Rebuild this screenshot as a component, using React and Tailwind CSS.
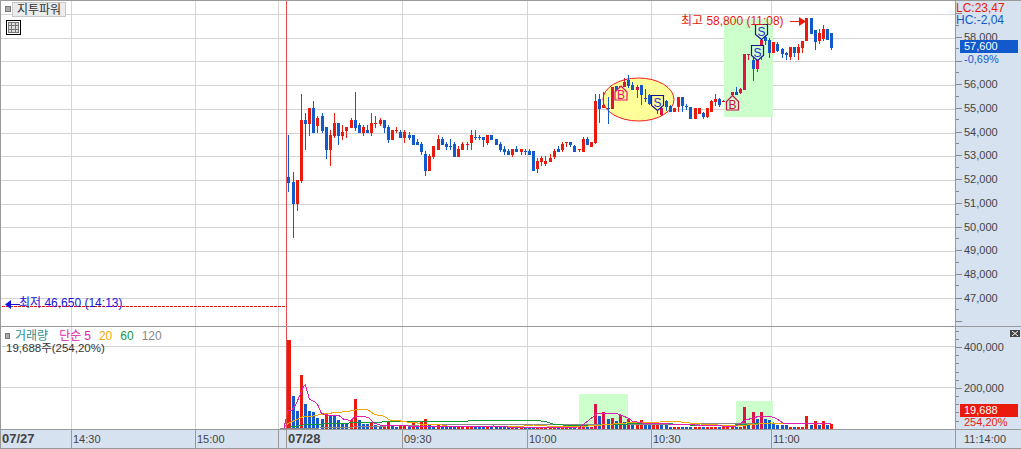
import React from "react";

const Z2 = [
[55,195,366,321,339,"b"],[70,306,504,336,402,"b"],[82,330,423,330,402,"r"],[94,72,339,150,333,"r"],[106,129,240,150,162,"b"],[118,114,198,114,162,"r"],[130,93,189,114,189,"b"],[142,138,189,144,168,"r"],
[157,129,189,138,183,"b"],[169,171,267,171,240,"b"],[181,180,288,195,240,"r"],[193,129,204,159,198,"r"],[205,159,225,159,198,"b"],[217,165,210,186,198,"r"],[229,171,204,171,183,"r"],
[244,144,174,150,174,"r"],[256,66,183,150,174,"b"],[268,159,189,165,189,"b"],[280,165,198,171,189,"r"],[292,165,189,180,189,"b"],[304,129,198,159,189,"r"],[316,138,174,159,162,"r"],
[331,144,168,150,162,"r"],[343,150,189,150,174,"b"],[355,165,219,171,210,"b"],[367,180,210,180,210,"r"],[379,171,189,180,183,"r"],[391,180,204,186,204,"b"],[403,180,219,186,204,"r"],
[418,186,210,195,204,"b"],[430,195,225,195,225,"b"],[442,207,225,216,225,"b"],[454,216,255,222,246,"b"],[466,243,318,252,303,"b"],[478,252,303,258,303,"r"],[490,228,267,228,261,"r"],
[505,195,240,207,240,"r"],[517,201,225,207,225,"b"],[529,216,240,222,231,"b"],[541,207,240,228,231,"b"],[553,216,261,222,261,"b"],[565,228,261,237,261,"r"],[577,216,240,222,240,"r"],
[592,216,240,222,225,"r"],[604,180,240,195,219,"r"],[616,180,210,201,204,"b"],[628,195,210,201,204,"b"],[640,201,231,201,210,"b"],[652,195,225,195,219,"r"],[664,195,210,195,210,"b"],
[679,207,225,207,225,"b"],[691,216,246,222,240,"b"],[703,228,255,237,246,"b"],[715,237,255,243,255,"b"],[727,237,261,237,255,"r"],[739,228,246,237,246,"b"],
[754,237,255,237,246,"r"],[766,237,255,243,246,"b"],[778,237,255,243,255,"b"],[790,243,303,243,303,"b"],[802,264,309,273,297,"r"],[814,258,288,264,276,"r"],[826,258,288,273,282,"r"],
[841,252,276,264,276,"r"],[853,237,267,243,261,"r"],[865,228,246,237,246,"b"],[877,216,246,222,240,"r"],[889,216,231,216,219,"r"],
];
const Z9 = [
[46,216,231,216,225,"b"],[58,225,246,228,246,"b"],[73,237,246,237,240,"r"],[85,201,246,207,246,"r"],[97,201,225,207,225,"b"],[109,216,231,216,231,"r"],[121,72,222,93,219,"r"],[133,72,159,87,117,"b"],
[145,66,114,105,114,"r"],[160,81,162,114,117,"b"],[172,51,117,51,117,"r"],[184,48,90,48,69,"b"],[196,48,66,48,66,"r"],[208,24,51,36,51,"r"],[220,15,54,30,48,"b"],[232,36,60,45,60,"b"],
[247,45,84,51,60,"r"],[259,45,105,45,75,"b"],[271,57,96,84,87,"b"],[283,72,105,75,102,"b"],[295,87,111,90,111,"b"],[307,105,132,105,120,"b"],[319,111,138,114,135,"r"],
[334,90,123,93,111,"b"],[346,105,126,108,126,"b"],[358,114,126,114,126,"r"],
];
const Z10 = [
[25,261,306,261,291,"r"],[37,261,306,261,288,"b"],[49,282,300,288,291,"b"],[61,291,327,291,327,"b"],[76,294,327,294,327,"r"],[88,294,312,294,312,"r"],[100,306,327,309,321,"b"],
[112,294,324,294,321,"r"],[124,270,306,273,306,"r"],[136,252,288,267,276,"r"],[148,264,291,267,285,"b"],[160,270,276,273,276,"r"],[172,270,276,273,276,"r"],[187,246,258,246,255,"r"],
[199,231,255,246,255,"b"],[211,234,252,237,249,"r"],[223,132,240,132,240,"r"],[235,132,150,132,135,"r"],[250,135,213,150,177,"b"],[262,150,186,150,177,"r"],[274,90,150,90,108,"r"],
[286,75,105,81,93,"b"],[298,84,144,90,129,"b"],[310,96,129,96,129,"r"],[322,96,126,102,123,"b"],[337,114,144,117,132,"b"],[349,126,150,129,135,"b"],[361,111,150,111,141,"r"],
[373,111,141,111,129,"b"],[385,102,150,111,129,"r"],[397,93,129,93,114,"r"],[409,24,93,24,93,"r"],[424,24,72,24,72,"b"],[436,60,120,60,96,"b"],[448,57,102,69,93,"r"],[460,45,93,57,87,"r"],
[472,57,90,57,90,"b"],[484,69,120,69,114,"b"],
];

const conv = (list, ox, oy) =>
  list.map(([x, h, l, t, b, c]) => ({
    x: Math.floor(ox + x / 3),
    hi: Math.round(oy + h / 3),
    lo: Math.round(oy + l / 3),
    top: Math.round(oy + t / 3),
    bot: Math.round(oy + b / 3),
    c,
  }));

const candles = [...conv(Z2, 270, 70), ...conv(Z9, 555, 70), ...conv(Z10, 670, 10)];

const RED = "#ea1a0c";
const BLUE = "#1259cc";
const CRIM = "#dc1446";

const mainColor = (c) => {
  if (c.c === "b") return BLUE;
  if ((c.x >= 607 && c.x <= 664) || (c.x >= 725 && c.x <= 772)) return CRIM;
  return RED;
};

const volTops = [
[288,340],[293,396],[297,411],[301,375],[305,404],[309,411],[313,412],[317,418],[322,419],[326,413],[330,415],[334,416],[338,420],[342,423],[346,423],[351,420],[355,399],[359,420],[363,424],[367,424],[371,423],[375,425],[379,426],[384,426],[388,422],[392,426],[396,427],[400,426],[404,426],[409,426],[413,423],[417,426],[421,422],[425,419],[429,425],[433,426],[438,425],[442,427],[446,427],
[595,404],[599,416],[603,412],[608,419],[612,418],[616,421],[620,415],[624,422],[629,419],[633,425],[637,425],[641,420],[645,425],[649,425],[653,425],[657,425],[661,425],[666,425],
[744,407],[748,425],[753,412],[757,419],[761,412],[765,419],[769,420],[773,424],[777,425],[782,425],[786,425],[806,416],[811,425],[815,421],[819,425],[823,421],[827,425],[831,424],
];
const volTop = (x) => {
  const f = volTops.find(([vx]) => Math.abs(vx - x) <= 1);
  return f ? f[1] : 427;
};
const volRed = [288, 301, 326, 351, 355, 371, 384, 388, 400, 404, 413, 421, 425, 438, 595, 603, 612, 620, 629, 637, 641, 653, 657, 744, 753, 761, 806, 815, 823, 831];
const volBlue = [293, 297, 305, 309, 313, 317, 322, 330, 334, 338, 342, 346, 359, 363, 367, 375, 379, 392, 396, 409, 417, 429, 433, 442, 446, 599, 608, 616, 624, 633, 645, 649, 661, 666, 748, 757, 765, 769, 773, 777, 782, 786, 811, 819, 827];
const volColor = (c) => {
  const near = (l) => l.some((v) => Math.abs(v - c.x) <= 1);
  const base = near(volRed) ? "r" : near(volBlue) ? "b" : c.c;
  if (base === "b") return BLUE;
  if ((c.x >= 579 && c.x <= 628) || (c.x >= 736 && c.x <= 772)) return CRIM;
  return RED;
};

const mainGrid = Array.from({ length: 13 }, (_, i) => Math.round(14 + i * 23.7));
const verticals = [71, 195, 278, 402, 527, 651, 771];

const pts = (arr, ox, oy) => arr.map(([x, y]) => `${ox + x / 3},${oy + y / 3}`).join(" ");

const house = (x, y, w, h, pk) =>
  `${x + w / 2},${y} ${x + w},${y + pk} ${x + w},${y + h} ${x},${y + h} ${x},${y + pk}`;
const shield = (x, y, w, h, pk) =>
  `${x},${y} ${x + w},${y} ${x + w},${y + h - pk} ${x + w / 2},${y + h} ${x},${y + h - pk}`;

const MainChart = () => (
  <svg viewBox="1 1 954 325" width="954" height="325" className="block absolute inset-0" shapeRendering="crispEdges">
    {mainGrid.map((y) => <rect key={y} x="1" y={y} width="954" height="1" fill="#d4d4d4" />)}
    {verticals.map((x) => <rect key={x} x={x} y="1" width="1" height="325" fill="#d4d4d4" />)}
    <rect x="724" y="19" width="49" height="98" fill="#ccffcc" />
    <ellipse cx="638.5" cy="99.5" rx="35.5" ry="21.5" fill="#ffff99" stroke="#ec1c1c" strokeWidth="1" shapeRendering="auto" />
    {candles.map((c) => (
      <g key={c.x} fill={mainColor(c)}>
        <rect x={c.x} y={c.hi} width="1" height={Math.max(c.lo - c.hi, 1)} />
        <rect x={c.x - 1} y={c.top} width="3" height={Math.max(c.bot - c.top, 1)} />
      </g>
    ))}
    <polygon points={house(615, 86, 12, 14, 6)} fill="#ffff99" stroke="#e8106a" strokeWidth="1.2" shapeRendering="auto" />
    <text x="621" y="99" textAnchor="middle" fontSize="12" fontFamily="Liberation Sans" fill="#e8106a">B</text>
    <polygon points={house(726.5, 95.5, 12, 14.5, 6)} fill="#ccffcc" stroke="#c8104a" strokeWidth="1.2" shapeRendering="auto" />
    <text x="732.5" y="108.5" textAnchor="middle" fontSize="12" fontFamily="Liberation Sans" fill="#c8104a">B</text>
    {[[651.5, 95.5, "#ffff99"], [751.5, 45.5, "#ccffcc"], [755.5, 24.5, "#ccffcc"]].map(([x, y, f]) => (
      <g key={x}>
        <polygon points={shield(x, y, 12, 15, 5)} fill={f} stroke="#14148c" strokeWidth="1.2" shapeRendering="auto" />
        <text x={x + 6} y={y + 11} textAnchor="middle" fontSize="12" fontFamily="Liberation Sans" fill="#2a2ad0">S</text>
      </g>
    ))}
    <rect x="790" y="21" width="10" height="1" fill={RED} />
    <polygon points="799,17 806,21.5 799,26" fill={RED} shapeRendering="auto" />
    <line x1="2" y1="306.5" x2="286" y2="306.5" stroke="#e81010" strokeDasharray="3 1" />
    <polygon points="5,304.5 11,300 11,309" fill="#1414dc" shapeRendering="auto" />
    <rect x="10" y="304" width="10" height="1" fill="#1414dc" />
    <rect x="286" y="1" width="1" height="325" fill="#e84a4a" />
  </svg>
);

const VolumeChart = () => (
  <svg viewBox="1 327 954 102" width="954" height="102" className="block absolute inset-0" shapeRendering="crispEdges">
    {[346, 387].map((y) => <rect key={y} x="1" y={y} width="954" height="1" fill="#d4d4d4" />)}
    {verticals.map((x) => <rect key={x} x={x} y="327" width="1" height="102" fill="#d4d4d4" />)}
    <rect x="579" y="394" width="49" height="35" fill="#ccffcc" />
    <rect x="736" y="401" width="37" height="28" fill="#ccffcc" />
    {candles.map((c) => (
      <rect key={c.x} x={c.x - 1} y={volTop(c.x)} width={c.x === 288 ? 4 : 3} height={429 - volTop(c.x)} fill={volColor(c)} />
    ))}
    <g fill="none" strokeWidth="1">
      <polyline stroke="#8a8a8a" points="280,428.5 320,428 420,425 440,424.5 560,424.5 700,424 831,423.5" />
      <polyline stroke="#149a3a" points={pts([[30,291],[70,285],[130,282],[205,280],[210,276],[305,276],[310,273],[565,273],[570,271],[770,271],[800,276],[820,282],[880,288],[900,287]], 280, 330) + " 600,425 628,424 655,423 690,425 735,425 773,423 831,424"} />
      <polyline stroke="#f0a800" points={pts([[12,294],[24,280],[48,270],[70,260],[100,258],[140,250],[170,248],[205,244],[225,240],[260,237],[285,254],[310,258],[330,270],[355,272],[380,276],[405,276],[420,282],[470,282],[500,288],[560,288],[570,290],[715,290],[760,285],[830,290],[900,290]], 280, 330) + " 626,423 677,421.5 685,422.5 701,424 735,426 770,423 790,423.5 831,423"} />
      <polyline stroke="#e020b0" points={pts([[12,294],[24,240],[36,240],[48,222],[60,195],[70,170],[76,165],[88,207],[100,213],[112,222],[124,250],[140,255],[175,255],[190,267],[205,270],[214,270],[222,262],[240,258],[265,262],[280,278],[300,285],[330,285],[420,290],[560,291],[640,288],[700,292],[900,291]], 280, 330) + " 598,413 612,413 618,414 628,418 632,421 642,423 735,426.5 746,420 760,416 770,416 777,419 783,423 831,423"} />
    </g>
    <rect x="286" y="327" width="1" height="102" fill="#e84a4a" />
  </svg>
);

const priceRows = [
  ["", 0], ["58,000", 1], ["", 2], ["56,000", 3], ["55,000", 4], ["54,000", 5], ["53,000", 6], ["52,000", 7],
  ["51,000", 8], ["50,000", 9], ["49,000", 10], ["48,000", 11], ["47,000", 12], ["", 13],
];

const PriceAxis = () => (
  <div className="relative w-[66px] h-full bg-[#d6e2f0] border-l border-[#999] overflow-hidden pt-[1px]">
    {priceRows.map(([t, i]) => (
      <div key={i} className="relative flex items-center h-[23.7px]">
        <div className="w-[6px] h-px bg-[#888] shrink-0" />
        <span className="ml-[2px] text-[11px] leading-none text-[#444]">{t}</span>
        <div className="absolute left-0 bottom-0 w-[3px] h-px bg-[#888]" />
      </div>
    ))}
    <div className="absolute left-0 top-[1px] flex flex-col text-[12px] leading-[12px]">
      <span className="text-[#ea1a0c]">LC:23,47</span>
      <span className="text-[#1259cc]">HC:-2,04</span>
    </div>
    <div className="absolute left-[4px] top-[39px] w-[58px] h-[13px] bg-[#1259cc] flex items-center pl-[4px] text-[11px] leading-none text-white">57,600</div>
    <div className="absolute left-[8px] top-[52px] text-[11px] leading-[13px] text-[#1259cc]">-0,69%</div>
  </div>
);

const volRows = Array.from({ length: 12 }, (_, i) => i);
const VolumeAxis = () => (
  <div className="relative w-[66px] h-full bg-[#d6e2f0] border-l border-[#999] overflow-hidden">
    {volRows.map((i) => (
      <div key={i} className="flex items-center h-[8.2px]">
        <div className={i === 2 || i === 7 ? "w-[6px] h-px bg-[#888] shrink-0" : "w-[3px] h-px bg-[#888] shrink-0"} />
        {i === 2 && <span className="ml-[2px] text-[11px] leading-none text-[#444] whitespace-nowrap">400,000</span>}
        {i === 7 && <span className="ml-[2px] text-[11px] leading-none text-[#444] whitespace-nowrap">200,000</span>}
      </div>
    ))}
    <div className="absolute left-[54px] top-[3px] w-[10px] h-[7px] bg-[#444] flex items-center justify-center">
      <svg width="6" height="5" viewBox="0 0 6 5"><path d="M0 0 L6 5 M6 0 L0 5" stroke="#fff" strokeWidth="1" /></svg>
    </div>
    <div className="absolute left-[4px] top-[77px] w-[58px] h-[13px] bg-[#ea1a0c] flex items-center pl-[4px] text-[11px] leading-none text-white">19,688</div>
    <div className="absolute left-[8px] top-[89px] text-[11px] leading-[13px] text-[#ea1a0c]">254,20%</div>
  </div>
);

const timeCells = [
  ["07/27", "w-[70px]", true],
  ["14:30", "w-[124px]", false],
  ["15:00", "w-[83px]", false],
  ["", "w-[8px]", false],
  ["07/28", "w-[116px]", true],
  ["09:30", "w-[125px]", false],
  ["10:00", "w-[124px]", false],
  ["10:30", "w-[120px]", false],
  ["11:00", "w-[184px]", false],
  ["11:14:00", "w-[66px] pl-[8px]", false],
];

export default function App() {
  return (
    <div className="w-[1021px] h-[449px] bg-white border-t border-l border-[#999] overflow-hidden font-['Liberation_Sans','Noto_Sans_CJK_KR',sans-serif]">
      <div className="flex h-[325px]">
        <div className="relative w-[954px] h-full">
          <MainChart />
          <div className="absolute left-[4px] top-[5px] w-[6px] h-[6px] bg-[#aaa] border border-[#777]" />
          <div className="absolute left-[11px] top-[1px] w-[54px] h-[15px] bg-[#ebebeb] border border-[#c8c8c8] flex items-center justify-center text-[12px] leading-none text-[#333]">지투파워</div>
          <div className="absolute left-[5px] top-[19px] w-[15px] h-[15px] bg-white border border-black flex items-center justify-center">
            <svg width="11" height="11" viewBox="0 0 11 11" shapeRendering="crispEdges">
              <rect x="0" y="0" width="11" height="11" fill="#ddd" />
              <path d="M0 0.5H11M0 3.5H11M0 7.5H11M0 10.5H11M0.5 0V11M3.5 0V11M7.5 0V11M10.5 0V11" stroke="#777" fill="none" />
            </svg>
          </div>
          <div className="absolute left-[680px] top-[13px] text-[12px] leading-[14px] text-[#ea1a0c] whitespace-nowrap">최고 58,800 (11:08)</div>
          <div className="absolute left-[18px] top-[295px] text-[12px] leading-[14px] text-[#1414dc] whitespace-nowrap">최저 46,650 (14:13)</div>
        </div>
        <PriceAxis />
      </div>
      <div className="flex h-[103px] border-t border-[#999]">
        <div className="relative w-[954px] h-full">
          <VolumeChart />
          <div className="absolute left-[4px] top-[2px] flex items-center text-[12px] leading-[14px] whitespace-nowrap">
            <div className="w-[5px] h-[6px] bg-[#aaa] border border-[#777] mr-[5px]" />
            <span className="text-[#2f8f8f] mr-[11px]">거래량</span>
            <span className="text-[#e020b0] mr-[3px]">단순</span>
            <span className="text-[#e020b0] mr-[8px]">5</span>
            <span className="text-[#f0a800] mr-[8px]">20</span>
            <span className="text-[#149a3a] mr-[8px]">60</span>
            <span className="text-[#888]">120</span>
          </div>
          <div className="absolute left-[5px] top-[14px] text-[11.5px] leading-[14px] text-[#333] whitespace-nowrap">19,688주(254,20%)</div>
        </div>
        <VolumeAxis />
      </div>
      <div className="flex h-[20px] bg-[#d6e2f0] border-t border-b border-[#999]">
        {timeCells.map(([t, w, bold], i) => (
          <div key={i} className={`${w} shrink-0 h-full flex items-center pl-[1px] text-[#444] whitespace-nowrap overflow-visible ${i > 0 ? "border-l border-[#999]" : ""} ${bold ? "font-bold text-[13px]" : "text-[11px]"}`}>
            {t}
          </div>
        ))}
      </div>
    </div>
  );
}
